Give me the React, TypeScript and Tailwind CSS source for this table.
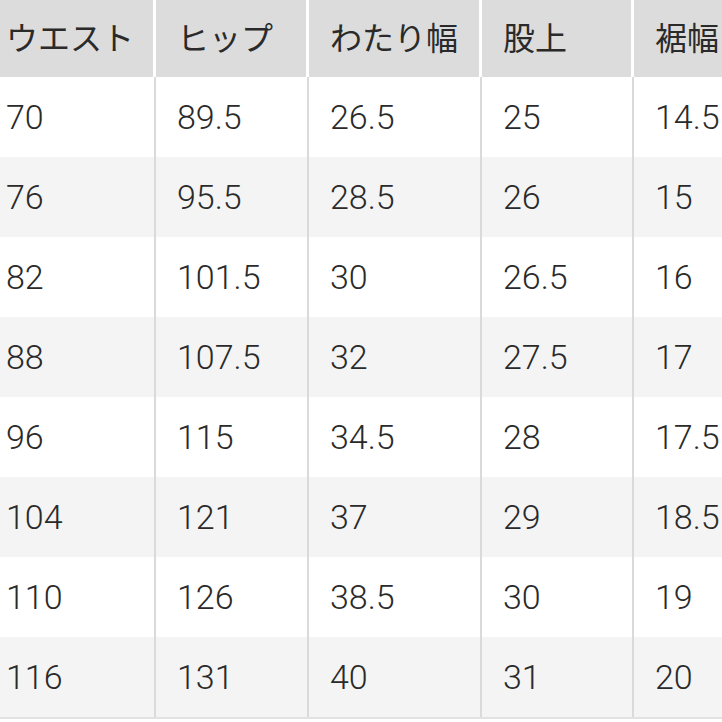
import React from 'react';

const headers = ['ウエスト', 'ヒップ', 'わたり幅', '股上', '裾幅'];

const rows = [
  ['70', '89.5', '26.5', '25', '14.5'],
  ['76', '95.5', '28.5', '26', '15'],
  ['82', '101.5', '30', '26.5', '16'],
  ['88', '107.5', '32', '27.5', '17'],
  ['96', '115', '34.5', '28', '17.5'],
  ['104', '121', '37', '29', '18.5'],
  ['110', '126', '38.5', '30', '19'],
  ['116', '131', '40', '31', '20'],
];

// column widths, first column starts off-screen
const widths = ['w-[171px]', 'w-[153px]', 'w-[173px]', 'w-[152px]', 'w-[160px]'];

const App = () => {
  return (
    <div
      className="w-[722px] h-[722px] overflow-hidden bg-white text-[#2a2a2a]"
      style={{ fontFamily: 'Roboto, "Noto Sans CJK JP", sans-serif' }}
    >
      <div className="ml-[-15px] w-[820px]">
        {/* header */}
        <div className="flex h-[77px] bg-[#dcdcdc]">
          {headers.map((h, i) => (
            <div
              key={h}
              className={`${widths[i]} shrink-0 flex items-center pl-[21px] text-[32px] border-r-[3px] border-white`}
            >
              {h}
            </div>
          ))}
        </div>

        {/* body */}
        <div className="border-b-2 border-[#e2e2e2]">
          {rows.map((r, ri) => (
            <div key={ri} className={`flex h-[80px] ${ri % 2 === 1 ? 'bg-[#f4f4f4]' : 'bg-white'}`}>
              {r.map((c, ci) => (
                <div
                  key={ci}
                  className={`${widths[ci]} shrink-0 flex items-center pl-[21px] text-[34px] font-light border-r-2 border-[#dadada]`}
                >
                  {c}
                </div>
              ))}
            </div>
          ))}
        </div>
      </div>
    </div>
  );
};

export default App;
